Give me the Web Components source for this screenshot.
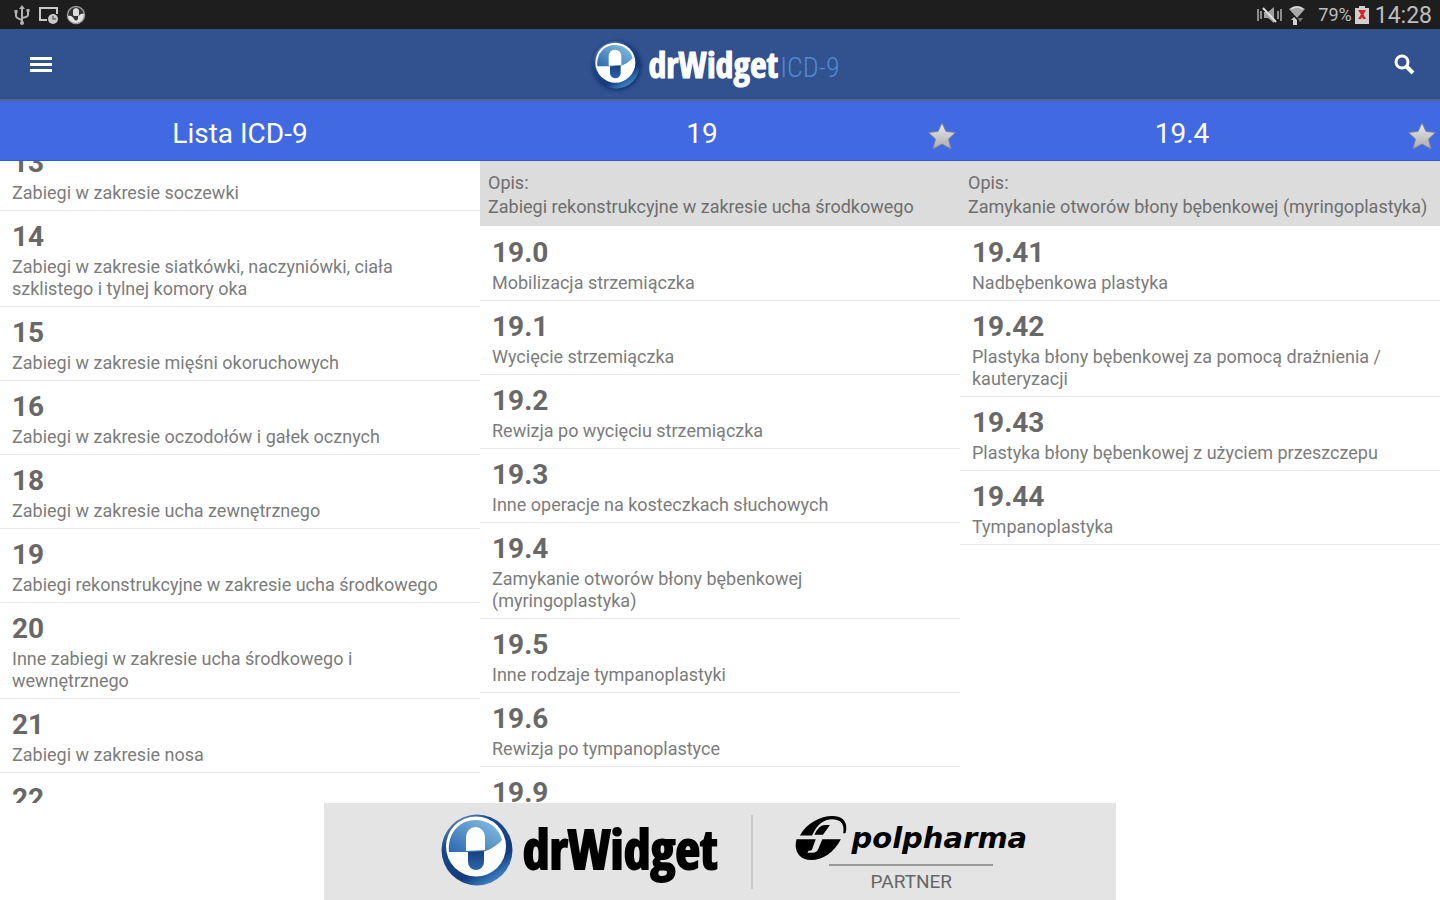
<!DOCTYPE html>
<html lang="pl">
<head>
<meta charset="utf-8">
<meta name="viewport" content="width=device-width, initial-scale=1">
<title>drWidget ICD-9</title>
<style>
  body { margin: 0; background: #fff; font-family: Roboto, "Noto Sans", sans-serif; color: #6e6e6e; }
</style>
</head>
<body>
<icd-app>
  <status-bar slot="top" battery="79%" time="14:28"></status-bar>
  <app-bar slot="top" suffix="ICD-9">drWidget</app-bar>

  <icd-column heading="Lista ICD-9" offset="25">
    <icd-item code="13">Zabiegi w zakresie soczewki</icd-item>
    <icd-item code="14">Zabiegi w zakresie siatkówki, naczyniówki, ciała szklistego i tylnej komory oka</icd-item>
    <icd-item code="15">Zabiegi w zakresie mięśni okoruchowych</icd-item>
    <icd-item code="16">Zabiegi w zakresie oczodołów i gałek ocznych</icd-item>
    <icd-item code="18">Zabiegi w zakresie ucha zewnętrznego</icd-item>
    <icd-item code="19">Zabiegi rekonstrukcyjne w zakresie ucha środkowego</icd-item>
    <icd-item code="20">Inne zabiegi w zakresie ucha środkowego i wewnętrznego</icd-item>
    <icd-item code="21">Zabiegi w zakresie nosa</icd-item>
    <icd-item code="22"></icd-item>
  </icd-column>

  <icd-column heading="19" starred>
    <icd-note slot="note" label="Opis:">Zabiegi rekonstrukcyjne w zakresie ucha środkowego</icd-note>
    <icd-item code="19.0">Mobilizacja strzemiączka</icd-item>
    <icd-item code="19.1">Wycięcie strzemiączka</icd-item>
    <icd-item code="19.2">Rewizja po wycięciu strzemiączka</icd-item>
    <icd-item code="19.3">Inne operacje na kosteczkach słuchowych</icd-item>
    <icd-item code="19.4">Zamykanie otworów błony bębenkowej (myringoplastyka)</icd-item>
    <icd-item code="19.5">Inne rodzaje tympanoplastyki</icd-item>
    <icd-item code="19.6">Rewizja po tympanoplastyce</icd-item>
    <icd-item code="19.9"></icd-item>
  </icd-column>

  <icd-column heading="19.4" starred>
    <icd-note slot="note" label="Opis:">Zamykanie otworów błony bębenkowej (myringoplastyka)</icd-note>
    <icd-item code="19.41">Nadbębenkowa plastyka</icd-item>
    <icd-item code="19.42">Plastyka błony bębenkowej za pomocą drażnienia / kauteryzacji</icd-item>
    <icd-item code="19.43">Plastyka błony bębenkowej z użyciem przeszczepu</icd-item>
    <icd-item code="19.44">Tympanoplastyka</icd-item>
  </icd-column>

  <partner-banner slot="bottom"></partner-banner>
</icd-app>

<script>
class BaseElement extends HTMLElement {
  connectedCallback() {
    if (this.shadowRoot) return;
    this.attachShadow({ mode: 'open' }).innerHTML =
      `<style>:host,*{box-sizing:border-box}svg{display:block}</style>` + this.render();
    this.ready();
  }
  attr(name) { return this.getAttribute(name) || ''; }
  ready() {}
}

customElements.define('icd-app', class extends BaseElement {
  render() {
    return `<style>
      :host { display: flex; flex-direction: column; height: 100vh; }
      main { flex: 1; min-height: 0; display: grid; grid-template-columns: repeat(3, minmax(0, 1fr)); grid-template-rows: minmax(0, 1fr); }
    </style>
    <slot name="top"></slot><main><slot></slot></main><slot name="bottom"></slot>`;
  }
});

customElements.define('status-bar', class extends BaseElement {
  render() {
    return `<style>
      :host { display: flex; justify-content: space-between; align-items: center; height: 29px; padding: 0 8px 0 12px; background: #1e1e1e; color: #bdbdbd; }
      .group { display: flex; align-items: center; gap: 6px; }
      .power { display: flex; align-items: center; gap: 3px; font-size: 18px; margin-left: 6px; }
      time { font-size: 23px; line-height: 29px; padding-top: 1px; }
    </style>
    <div class="group">
      <svg width="20" height="22" viewBox="0 0 20 22" fill="none" stroke="#b4b4b4" stroke-width="2">
        <path d="M10 4v15M4 8v4q0 2 6 4M16 7v4q0 2-6 3"/><path d="M7 5l3-4 3 4zM2.500 6h3v3h-3zM14.500 5h3v3h-3z" fill="#b4b4b4" stroke="none"/><circle cx="10" cy="19" r="2" fill="#b4b4b4" stroke="none"/>
      </svg>
      <svg width="22" height="20" viewBox="0 0 22 20" fill="none" stroke="#c8c8c8" stroke-width="2">
        <path d="M9 15H2V3h17v6"/><circle cx="15" cy="14" r="5" fill="#c8c8c8" stroke="none"/><path d="M15 11v3h3" stroke="#666" stroke-width="1.500"/>
      </svg>
      <svg width="20" height="20" viewBox="0 0 20 20">
        <circle cx="10" cy="10" r="8.500" fill="#333" stroke="#999" stroke-width="1.500"/><path d="M2 11c3-1 5 1 6 3l3-1c2-2 3-5 7-4 0 6-4 9-8 9s-8-3-8-7z" fill="#e4e4e4"/><path d="M7 5q3-4 6 0v5q-3 4-6 0z" fill="#ddd"/><path d="M8 11h4v3q-2 3-4 0z" fill="#333"/>
      </svg>
    </div>
    <div class="group">
      <svg width="25" height="20" viewBox="0 0 25 20" fill="none" stroke="#8c8c8c" stroke-width="2">
        <path d="M1 4v12M4 6v8M21 6v8M24 4v12"/><path d="M7 7h4l6-5v16l-6-5H7z" fill="#a0a0a0" stroke="none"/><path d="M6 3l13 14" stroke="#ddd"/>
      </svg>
      <svg width="18" height="22" viewBox="0 0 18 22">
        <path d="M1 5q8-6 16 0l-8 9z" fill="#a8a8a8"/><path d="M3 5q6-4 12 0" fill="none" stroke="#ddd" stroke-width="1.500"/><path d="M3 16l3-3 3 3v5H5v-5z" fill="#d0d0d0"/><path d="M10 14h5l-3 4z" fill="#777"/>
      </svg>
      <span class="power"><span>${this.attr('battery')}</span>
      <svg width="14" height="18" viewBox="0 0 14 18">
        <path d="M4 0h6v2h4v16H0V2h4z" fill="#cfcfcf"/><path d="M3 4l3 4.500L3 13h3l1-2 1 2h3L8.500 8.500 11 4z" fill="#d22"/>
      </svg></span>
      <time>${this.attr('time')}</time>
    </div>`;
  }
});

/* Round pill emblem; its size follows the width given by its user. */
customElements.define('pill-mark', class extends BaseElement {
  render() {
    return `<style>:host { display: block; } svg { width: 100%; height: auto; }</style>
    <svg viewBox="0 0 72 72" aria-hidden="true">
      <defs>
        <linearGradient id="rim" x1="0" y1="0" x2="0.6" y2="1"><stop offset="0" stop-color="#7da5cf"/><stop offset=".35" stop-color="#1d4a8c"/><stop offset=".8" stop-color="#123a7c"/><stop offset="1" stop-color="#3a7fc0"/></linearGradient>
        <linearGradient id="sky" x1="0" y1="1" x2="1" y2="0"><stop offset="0" stop-color="#2b69ae"/><stop offset="1" stop-color="#8cc3e6"/></linearGradient>
        <linearGradient id="cap" x1="0" y1="0" x2="0" y2="1"><stop offset="0" stop-color="#17407f"/><stop offset="1" stop-color="#2c66ac"/></linearGradient>
      </defs>
      <circle cx="36" cy="36" r="35.500" fill="url(#rim)"/>
      <circle cx="35" cy="32.500" r="30" fill="#fff"/>
      <path d="M8 38C6 20 18 6 34 6c14 0 24 8 27 20-6 6-12 10-20 12z" fill="url(#sky)"/>
      <path d="M25 37V23a9.500 10 0 0 1 19 0v13z" fill="#fff"/>
      <path d="M27 38l16-1v11a8 8 0 0 1-16 0z" fill="url(#cap)"/>
    </svg>`;
  }
});

customElements.define('app-bar', class extends BaseElement {
  render() {
    return `<style>
      :host { display: grid; grid-template-columns: 1fr auto 1fr; align-items: center; height: 72px; padding: 2px 20px 0 24px; background: #31518f; border-bottom: 2px solid #53648a; color: #fff; }
      button { border: 0; background: none; padding: 4px; color: inherit; }
      .menu { justify-self: start; }
      .search { justify-self: end; }
      .brand { display: flex; align-items: center; padding-right: 12px; }
      pill-mark { width: 48px; margin-right: 8px; filter: drop-shadow(1px 1px 2px #0d2a5e); }
      .name { font: bold 36px/48px "Open Sans Condensed", "Roboto Condensed", sans-serif; -webkit-text-stroke: 1px #fff; }
      .suffix { font: 300 28px/48px "Roboto Condensed", Roboto, sans-serif; color: #5089d0; padding: 6px 0 0 2px; }
    </style>
    <button class="menu" aria-label="Menu"><svg width="34" height="24" viewBox="0 0 34 24" fill="#fff"><path d="M2 4h22v3H2zM2 10h22v3H2zM2 16h22v3H2z"/></svg></button>
    <div class="brand"><pill-mark></pill-mark><span class="name"><slot></slot></span><span class="suffix">${this.attr('suffix')}</span></div>
    <button class="search" aria-label="Szukaj"><svg width="24" height="24" viewBox="0 0 24 24" fill="none" stroke="#fff"><circle cx="10" cy="9" r="6" stroke-width="3"/><path d="M14 13l7 7" stroke-width="4"/></svg></button>`;
  }
});

customElements.define('icd-column', class extends BaseElement {
  render() {
    const star = this.hasAttribute('starred') ? `<button aria-label="Ulubione">
      <svg width="30" height="30" viewBox="0 0 30 30"><defs><linearGradient id="metal" x1="0" y1="0" x2="0" y2="1"><stop offset="0" stop-color="#ececec"/><stop offset="1" stop-color="#ababab"/></linearGradient></defs>
      <path d="M15 2l4 8.500 9.500 1-7 6.500 2.500 10-9-5-9 5 2.500-10-7-6.500 9.500-1z" fill="url(#metal)" stroke="#7c869c" stroke-width="1" stroke-linejoin="round"/></svg></button>` : '';
    return `<style>
      :host { display: flex; flex-direction: column; min-height: 0; }
      header { display: flex; align-items: center; height: 60px; background: #4169e1; color: #fff; flex: none; border-bottom: 1px solid #2f5bdc; }
      h2 { flex: 1; margin: 0; padding-top: 6px; text-align: center; font-size: 28px; line-height: 36px; font-weight: 400; }
      button { border: 0; background: none; padding: 10px 3px 0; flex: none; }
      .list { flex: 1; min-height: 0; padding-top: 1px; overflow: hidden auto; scrollbar-width: none; }
    </style>
    <header><h2>${this.attr('heading')}</h2>${star}</header>
    <slot name="note"></slot>
    <div class="list" role="list"><slot></slot></div>`;
  }
});

customElements.define('icd-note', class extends BaseElement {
  render() {
    return `<style>
      :host { display: block; flex: none; background: #dcdcdc; padding: 10px 8px 7px; font-size: 18px; line-height: 24px; color: #6e6e6e; }
      p { margin: 0; }
    </style><p>${this.attr('label')}</p><p><slot></slot></p>`;
  }
});

customElements.define('icd-item', class extends BaseElement {
  render() {
    return `<style>
      :host { display: block; border-bottom: 1px solid #e8e8e8; }
      a { display: block; padding: 8px 12px 6px; color: inherit; text-decoration: none; }
      .code { display: block; font-size: 28px; line-height: 36px; font-weight: 700; color: #686868; }
      .text { display: block; padding-top: 1px; font-size: 18px; line-height: 22px; color: #7c7c7c; }
    </style><a href="#${this.attr('code')}"><span class="code">${this.attr('code')}</span><span class="text"><slot></slot></span></a>`;
  }
  ready() { this.setAttribute('role', 'listitem'); }
});

customElements.define('partner-banner', class extends BaseElement {
  render() {
    return `<style>
      :host { display: flex; justify-content: center; background: #fff; }
      .ad { width: 55%; height: 97px; padding-left: 28px; background: #e4e4e4; display: flex; justify-content: center; align-items: center; }
      .own { display: flex; align-items: center; gap: 10px; padding: 0 34px 4px 0; border-right: 2px solid #cacaca; height: 74px; }
      pill-mark { width: 72px; }
      .name { font: bold 54px/72px "Open Sans Condensed", "Roboto Condensed", sans-serif; color: #000; -webkit-text-stroke: 2px #000; padding-bottom: 4px; }
      .partner { padding: 6px 0 0 42px; display: flex; flex-direction: column; align-items: center; }
      .logo { display: flex; align-items: center; gap: 4px; color: #000; }
      .word { font: italic bold 29px/44px "DejaVu Sans", sans-serif; }
      hr { width: 164px; border: 0; height: 2px; background: #999; margin: 4px 0; }
      small { font-size: 19px; line-height: 24px; color: #666; }
    </style>
    <div class="ad">
      <div class="own"><pill-mark></pill-mark><span class="name">drWidget</span></div>
      <div class="partner">
        <div class="logo">
          <svg width="52" height="44" viewBox="0 0 156 133" aria-hidden="true">
            <path d="M14 59C34 22 76 0 112 0c34 0 49 20 40 52h-7c5-28-8-42-33-42-26 0-46 16-61 49z"/>
            <path d="M58 57c8-18 18-30 33-30h14L84 57z"/>
            <path d="M4 70h58L52 98c-1 5-4 7-12 7l-3 6h15c10 0 14-3 18-12l12-29h56c-20 40-56 63-90 63C14 133-6 108 4 70z"/>
          </svg>
          <span class="word">polpharma</span>
        </div>
        <hr><small>PARTNER</small>
      </div>
    </div>`;
  }
});

for (const column of document.querySelectorAll('icd-column[offset]')) {
  column.shadowRoot.querySelector('.list').scrollTop = Number(column.getAttribute('offset'));
}
</script>
</body>
</html>
